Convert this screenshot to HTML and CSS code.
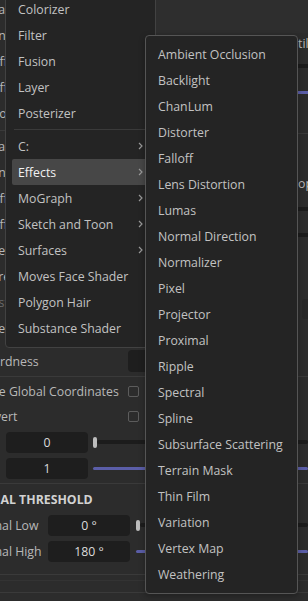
FILE: index.html
```html
<!DOCTYPE html>
<html lang="en">

<head>
    <meta charset="UTF-8">
    <meta name="viewport" content="width=device-width, initial-scale=1.0">
    <title>Shader Menu</title>
    <link rel="stylesheet" href="styles.css">
</head>

<body>

    <div class="panel">
        <div class="top">
            <!-- Left attribute column (mostly hidden behind the menu) -->
            <div class="col-left">
                <div class="row"><span class="label">Shade</span></div>
                <div class="row"><span class="label">Tone</span></div>
                <div class="row"><span class="label">Buffer</span></div>
                <div class="row"><span class="label">Buffer</span></div>
                <div class="row"><span class="label">Choice</span></div>
                <div class="sep small"></div>
                <div class="row"><span class="label">Shape</span></div>
                <div class="row"><span class="label">Tone</span></div>
                <div class="row"><span class="label">Buffer</span></div>
                <div class="row"><span class="label">Buffer</span></div>
                <div class="row"><span class="label">Theme</span></div>
                <div class="row"><span class="label">Spread</span></div>
                <div class="row"><span class="label dim">Cast</span></div>
                <div class="row"><span class="label">Shell</span></div>
            </div>

            <!-- Right attribute column -->
            <div class="col-right">
                <div class="head"></div>
                <div class="rrow short"><span class="rlabel">tiling</span></div>
                <div class="rrow"><div class="track"></div></div>
                <div class="rrow"><div class="track blue"></div></div>
                <div class="gap"></div>
                <div class="sep"></div>
                <div class="gap2"></div>
                <div class="rrow"><span class="rlabel">opacity</span></div>
                <div class="rrow"><div class="track"></div></div>
                <div class="rrow"><div class="track"></div></div>
                <div class="gap3"></div>
                <div class="rbox"></div>
            </div>
        </div>

        <div class="rows">
            <div class="row">
                <span class="label">Hardness</span>
                <div class="field wide"></div>
            </div>
            <div class="sep"></div>
            <div class="row check-row">
                <span class="label">Use Global Coordinates</span>
                <span class="checkbox"></span>
            </div>
            <div class="row check-row">
                <span class="label">Invert</span>
                <span class="checkbox"></span>
            </div>
            <div class="row slider-row">
                <div class="field">0</div>
                <span class="knob"></span>
                <div class="track"></div>
            </div>
            <div class="row slider-row">
                <div class="field">1</div>
                <div class="track blue"></div>
            </div>
            <div class="sep"></div>
            <div class="row heading">NORMAL THRESHOLD</div>
            <div class="row threshold-row">
                <span class="label">Normal Low</span>
                <div class="field">0 °</div>
                <span class="knob"></span>
                <div class="track"></div>
            </div>
            <div class="row threshold-row">
                <span class="label">Normal High</span>
                <div class="field">180 °</div>
                <div class="track blue"></div>
            </div>
            <div class="sep bottom"></div>
            <div class="sep footer"></div>
            <div class="statusbar"></div>
        </div>
    </div>

    <!-- Context menu -->
    <div class="menu main-menu">
        <div class="item">Colorizer</div>
        <div class="item">Filter</div>
        <div class="item">Fusion</div>
        <div class="item">Layer</div>
        <div class="item">Posterizer</div>
        <div class="menu-sep"></div>
        <div class="item has-sub">C:<svg class="arrow" width="5" height="8" viewBox="0 0 5 8"><path d="M1 1l3 3-3 3" /></svg></div>
        <div class="item has-sub active">Effects<svg class="arrow" width="5" height="8" viewBox="0 0 5 8"><path d="M1 1l3 3-3 3" /></svg></div>
        <div class="item has-sub">MoGraph<svg class="arrow" width="5" height="8" viewBox="0 0 5 8"><path d="M1 1l3 3-3 3" /></svg></div>
        <div class="item has-sub">Sketch and Toon<svg class="arrow" width="5" height="8" viewBox="0 0 5 8"><path d="M1 1l3 3-3 3" /></svg></div>
        <div class="item has-sub">Surfaces<svg class="arrow" width="5" height="8" viewBox="0 0 5 8"><path d="M1 1l3 3-3 3" /></svg></div>
        <div class="item">Moves Face Shader</div>
        <div class="item">Polygon Hair</div>
        <div class="item">Substance Shader</div>
    </div>

    <!-- Effects submenu -->
    <div class="menu sub-menu">
        <div class="item">Ambient Occlusion</div>
        <div class="item">Backlight</div>
        <div class="item">ChanLum</div>
        <div class="item">Distorter</div>
        <div class="item">Falloff</div>
        <div class="item">Lens Distortion</div>
        <div class="item">Lumas</div>
        <div class="item">Normal Direction</div>
        <div class="item">Normalizer</div>
        <div class="item">Pixel</div>
        <div class="item">Projector</div>
        <div class="item">Proximal</div>
        <div class="item">Ripple</div>
        <div class="item">Spectral</div>
        <div class="item">Spline</div>
        <div class="item">Subsurface Scattering</div>
        <div class="item">Terrain Mask</div>
        <div class="item">Thin Film</div>
        <div class="item">Variation</div>
        <div class="item">Vertex Map</div>
        <div class="item">Weathering</div>
    </div>

</body>

</html>
```

FILE: styles.css
```css
/* General Page Styles */
body {
    margin: 0;
    width: 308px;
    height: 601px;
    overflow: hidden;
    position: relative;
    background: #2c2c2c;
    color: #b8b8b8;
    font-family: 'Open Sans', 'Noto Sans', sans-serif;
    font-size: 12.3px;
}

.panel {
    display: flex;
    flex-direction: column;
    height: 601px;
}

/* Top area: two attribute columns */
.top {
    display: grid;
    grid-template-columns: 155px 1fr;
    height: 348px;
    overflow: hidden;
}

.col-left {
    margin-top: -4px;
}

.row {
    display: flex;
    align-items: center;
    height: 26px;
    white-space: nowrap;
}

.label {
    margin-left: -16px;
    width: 144px;
    flex-shrink: 0;
}

.label.dim {
    color: #6a6a6a;
}

.sep {
    height: 1px;
    background: #3a3a3a;
    margin: 2px 0;
}

.sep.small {
    margin: 4px 0 2px;
}

/* Right column */
.col-right {
    display: flex;
    flex-direction: column;
}

.head {
    height: 33px;
    border-left: 1px solid #3c3c3c;
    background: #2e2e2e;
    flex-shrink: 0;
}

.rrow {
    display: flex;
    align-items: center;
    height: 26px;
    flex-shrink: 0;
    white-space: nowrap;
}

.rrow.short {
    height: 20px;
}

.rlabel {
    margin-left: 143px;
}

.gap {
    height: 26px;
    flex-shrink: 0;
}

.gap2 {
    height: 34px;
    flex-shrink: 0;
}

.gap3 {
    height: 51px;
    flex-shrink: 0;
}

.rbox {
    height: 20px;
    margin-left: 147px;
    background: #272727;
    border-radius: 3px;
    flex-shrink: 0;
}

/* Tracks and sliders */
.track {
    flex: 1;
    height: 4px;
    background: #1c1c1c;
    border-radius: 2px;
}

.track.blue {
    height: 3px;
    background: #5b5ea8;
}

.rrow .track {
    margin-left: 60px;
}

.knob {
    width: 4px;
    height: 11px;
    border-radius: 2px;
    background: #bdbdbd;
    flex-shrink: 0;
}

/* Inputs */
.field {
    width: 82px;
    height: 21px;
    line-height: 21px;
    background: #1e1e1e;
    border-radius: 4px;
    text-align: center;
    color: #dcdcdc;
    flex-shrink: 0;
}

.field.wide {
    height: 22px;
}

.checkbox {
    width: 9px;
    height: 9px;
    border: 1px solid #5c5c5c;
    border-radius: 2px;
}

.check-row {
    height: 25px;
}

.check-row:first-of-type {
    margin-top: 1px;
}

.slider-row {
    padding-left: 6px;
}

.slider-row .knob {
    margin-left: 5px;
}

.slider-row .track.blue {
    margin-left: 5px;
}

.heading {
    margin-left: -39px;
    font-weight: bold;
    color: #d2d2d2;
    margin-top: 1px;
    height: 26px;
}

.threshold-row .label {
    margin-left: -31px;
    width: 79px;
}

.threshold-row .knob,
.threshold-row .track.blue {
    margin-left: 6px;
}

.sep.bottom {
    margin-top: 10px;
}

.sep.footer {
    margin: 5px 0 0;
    background: #333;
}

.statusbar {
    flex: 1;
    margin-top: 11px;
    background: #1b1b1b;
    border-top: 1px solid #3a3a3a;
}

/* Menus */
.menu {
    position: absolute;
    background: #242424;
    border-radius: 4px;
    white-space: nowrap;
    color: #c2c2c2;
}

.main-menu {
    left: 5px;
    top: -10px;
    width: 149px;
    padding: 5px 0 6px;
    border: 1px solid #424242;
}

.sub-menu {
    left: 145px;
    top: 35px;
    width: 151px;
    padding: 5px 0 6px;
    border: 1px solid #555;
    box-shadow: 0 2px 6px rgba(0, 0, 0, 0.3);
}

.item {
    display: flex;
    align-items: center;
    justify-content: space-between;
    height: 26px;
    margin: 0 6px;
    padding: 0 6px;
    border-radius: 2px;
}

.item.active {
    background: #474747;
    color: #f2f2f2;
}

.arrow {
    fill: none;
    stroke: #9a9a9a;
    stroke-width: 1.2;
}

.menu-sep {
    height: 1px;
    margin: 3px 0 3px 8px;
    background: #3a3a3a;
}
```
